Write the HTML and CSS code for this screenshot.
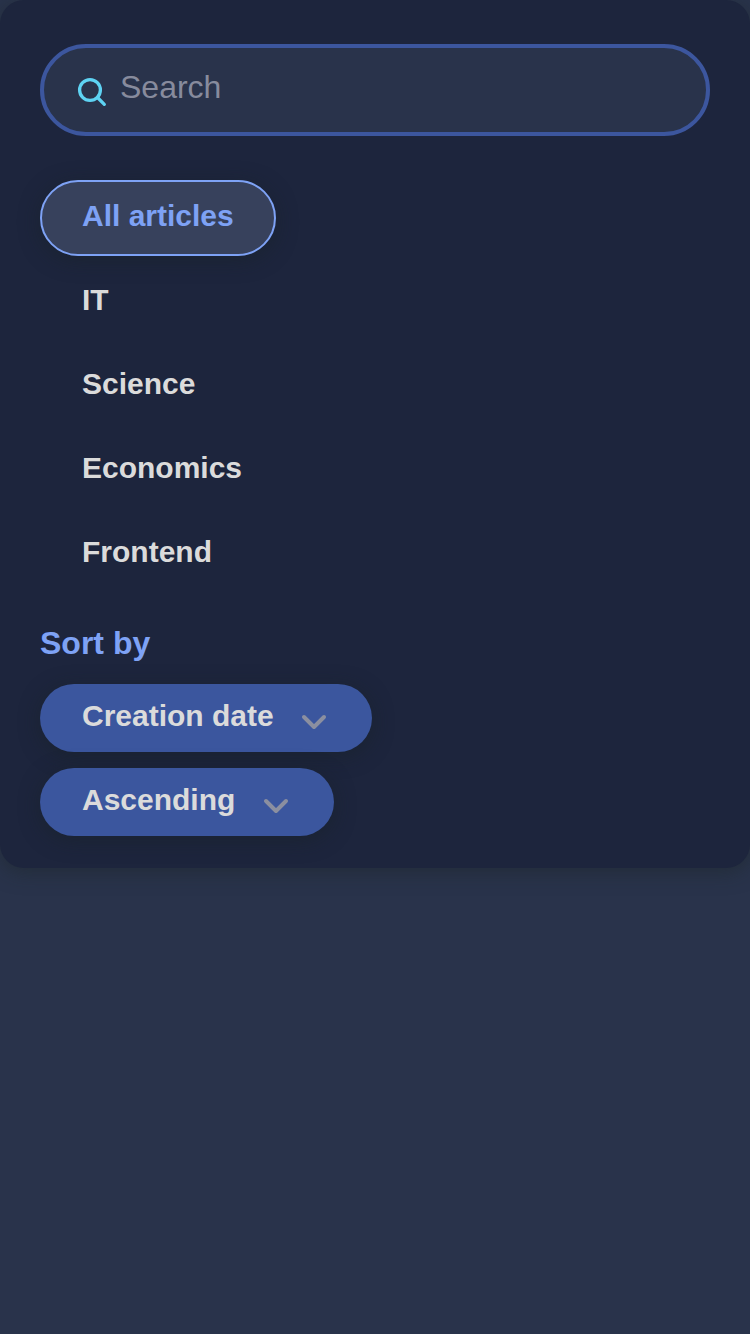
FILE: index.html
```html
<!DOCTYPE html>
<html lang="en">
<head>
<meta charset="utf-8">
<title>Articles</title>
<link rel="stylesheet" href="styles.css">
</head>
<body>
<main class="panel">
  <label class="search">
    <svg class="search-icon" viewBox="0 0 30 30"><circle cx="13" cy="13" r="10.4"/><path d="M20.5 20.5L27.3 27.3"/></svg>
    <span class="placeholder">Search</span>
  </label>
  <nav class="topics">
    <a class="topic active">All articles</a>
    <a class="topic">IT</a>
    <a class="topic">Science</a>
    <a class="topic">Economics</a>
    <a class="topic">Frontend</a>
  </nav>
  <section class="sorting">
    <h2 class="sort-title">Sort by</h2>
    <button class="select">Creation date<svg class="chevron" viewBox="0 0 26 18"><path d="M3 4L13 14L23 4"/></svg></button>
    <button class="select">Ascending<svg class="chevron" viewBox="0 0 26 18"><path d="M3 4L13 14L23 4"/></svg></button>
  </section>
</main>
</body>
</html>
```
FILE: styles.css
```css
* { box-sizing: border-box; }
body {
  margin: 0;
  min-height: 1334px;
  background: #29334b;
  font-family: "Liberation Sans", Arial, sans-serif;
}
.panel {
  height: 868px;
  padding: 44px 40px 32px;
  border-radius: 24px;
  background: #1d253d;
  box-shadow: 0 4px 20px rgba(28, 37, 38, 0.5);
}
.search {
  display: flex;
  height: 92px;
  padding: 0 32px;
  border: 4px solid #3c569e;
  border-radius: 46px;
  background: #29334b;
}
.search-icon {
  width: 30px;
  height: 30px;
  margin: 29px 14px 0 1px;
  fill: none;
  stroke: #5ed3f3;
  stroke-width: 3.3;
  stroke-linecap: round;
}
.placeholder {
  margin-top: 21px;
  margin-left: -1px;
  font-size: 32px;
  line-height: 36px;
  color: #878b9d;
}
.topics {
  display: flex;
  flex-direction: column;
  align-items: flex-start;
  gap: 8px;
  margin-top: 44px;
}
.topic {
  height: 76px;
  padding: 17px 40px 0;
  border: 2px solid transparent;
  border-radius: 38px;
  font-size: 30px;
  line-height: 34px;
  font-weight: 700;
  color: #dbdbdb;
}
.topic.active {
  border-color: #7ea2f5;
  background: #37415c;
  color: #7ea2f5;
  box-shadow: 0 4px 20px rgba(24, 34, 38, 0.5);
}
.sorting {
  display: flex;
  flex-direction: column;
  align-items: flex-start;
  gap: 16px;
  margin-top: 33px;
}
.sort-title {
  margin: 0 0 6px;
  font-size: 32px;
  line-height: 37px;
  color: #7ea2f5;
}
.select {
  display: flex;
  height: 68px;
  padding: 15px 45px 0 42px;
  border: 0;
  border-radius: 34px;
  background: #3b569e;
  box-shadow: 0 4px 20px rgba(24, 34, 38, 0.5);
  color: #dbdbdb;
  font: 700 30px/34px "Liberation Sans", Arial, sans-serif;
}
.chevron {
  width: 26px;
  height: 18px;
  margin: 14px 0 0 27.3px;
  fill: none;
  stroke: #8b8fa0;
  stroke-width: 4;
  stroke-linecap: round;
  stroke-linejoin: round;
}
```
